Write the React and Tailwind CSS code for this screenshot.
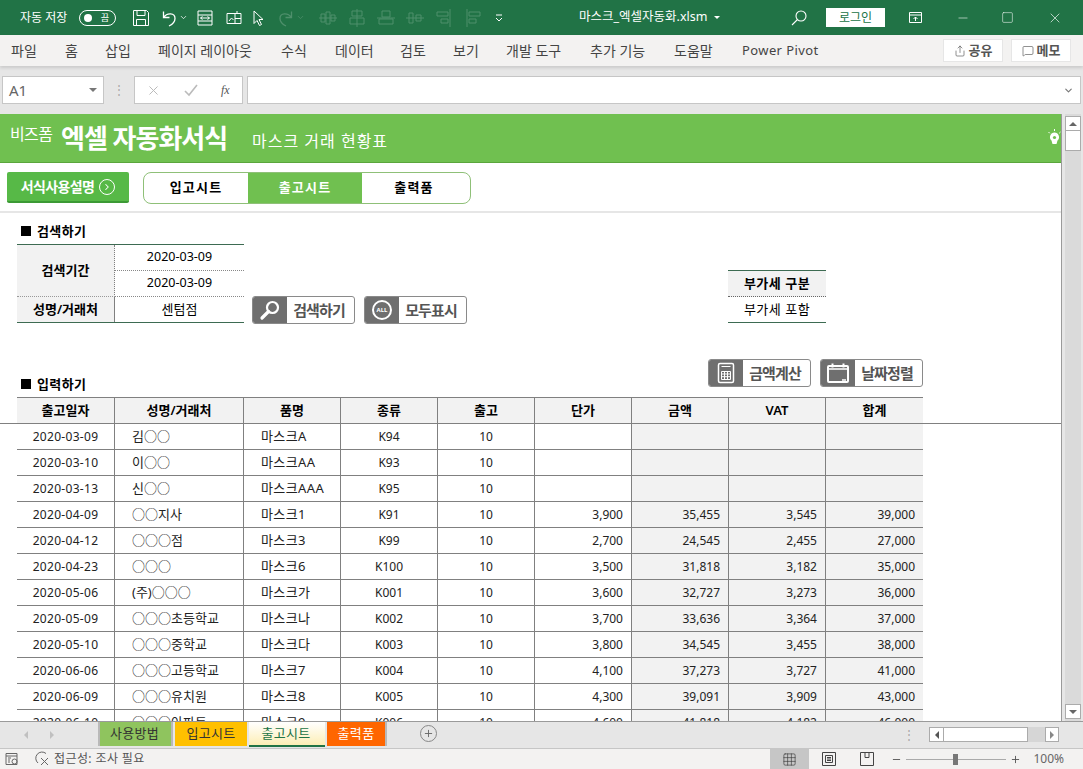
import { Minus, Square, X, Plus, ChevronDown, ChevronRight, MessageSquare, Share, Grid3x3 } from "lucide-react";

const cols = "grid-cols-[98px_129px_97px_97px_97px_97px_97px_97px_97px]";

const rows = [
  ["2020-03-09", "김○○", "마스크A", "K94", "10", "", "", "", ""],
  ["2020-03-10", "이○○", "마스크AA", "K93", "10", "", "", "", ""],
  ["2020-03-13", "신○○", "마스크AAA", "K95", "10", "", "", "", ""],
  ["2020-04-09", "○○지사", "마스크1", "K91", "10", "3,900", "35,455", "3,545", "39,000"],
  ["2020-04-12", "○○○점", "마스크3", "K99", "10", "2,700", "24,545", "2,455", "27,000"],
  ["2020-04-23", "○○○", "마스크6", "K100", "10", "3,500", "31,818", "3,182", "35,000"],
  ["2020-05-06", "(주)○○○", "마스크가", "K001", "10", "3,600", "32,727", "3,273", "36,000"],
  ["2020-05-09", "○○○초등학교", "마스크나", "K002", "10", "3,700", "33,636", "3,364", "37,000"],
  ["2020-05-10", "○○○중학교", "마스크다", "K003", "10", "3,800", "34,545", "3,455", "38,000"],
  ["2020-06-06", "○○○고등학교", "마스크7", "K004", "10", "4,100", "37,273", "3,727", "41,000"],
  ["2020-06-09", "○○○유치원", "마스크8", "K005", "10", "4,300", "39,091", "3,909", "43,000"],
  ["2020-06-10", "○○○아파트", "마스크9", "K006", "10", "4,600", "41,818", "4,182", "46,000"],
];

const menus = [
  ["파일", "w-[54px]"],
  ["홈", "w-[40px]"],
  ["삽입", "w-[53px]"],
  ["페이지 레이아웃", "w-[123px]"],
  ["수식", "w-[54px]"],
  ["데이터", "w-[65px]"],
  ["검토", "w-[53px]"],
  ["보기", "w-[53px]"],
  ["개발 도구", "w-[84px]"],
  ["추가 기능", "w-[84px]"],
  ["도움말", "w-[68px]"],
  ["Power Pivot", "w-[80px] text-[13px] tracking-[0.4px]"],
];
const headers = ["출고일자", "성명/거래처", "품명", "종류", "출고", "단가", "금액", "VAT", "합계"];

// title bar
function QatIcon({ children, dim }) {
  return (
    <svg width="18" height="18" viewBox="0 0 18 18" fill="none" stroke="white" strokeWidth="1" className={dim ? "opacity-20 shrink-0" : "shrink-0"}>
      {children}
    </svg>
  );
}

function TitleBar() {
  return (
    <div className="h-[35px] bg-[#217346] text-white flex items-center shrink-0 text-[12px]">
      <span className="ml-[20px] w-[59px] whitespace-nowrap">자동 저장</span>
      <div className="w-[37px] h-[16px] rounded-full border border-white flex items-center justify-between pl-[4px] pr-[6px]">
        <span className="w-[8px] h-[8px] rounded-full bg-white" />
        <span className="text-[9px] leading-none">끔</span>
      </div>
      <div className="ml-[16px] flex items-center">
        <QatIcon>
          <path d="M1.5 1.5h13l2 2v13h-15zM5 1.5v5h8v-5M4.5 16.5v-6h9v6" />
        </QatIcon>
        <div className="ml-[10px]">
          <QatIcon>
            <path d="M3.5 2.5v6h6M3.5 8.5C7 3.5 15 3.5 15 9.5c0 3.5-3 6-6 7.5" strokeWidth="1.3" />
          </QatIcon>
        </div>
        <ChevronDown size={9} className="ml-[1px]" />
        <div className="ml-[8px]">
          <QatIcon>
            <path d="M2 2h14v14H2zM2 6h14M2 12h14M4.5 9h9M4.5 9l2-1.5M4.5 9l2 1.5M13.5 9l-2-1.5M13.5 9l-2 1.5" />
          </QatIcon>
        </div>
        <div className="ml-[11px]">
          <QatIcon>
            <path d="M2 4.5h14v10H2zM10 4.5v10M10 9.5h6M4 12l2.5-3 2 2M12 2v2.5" />
          </QatIcon>
        </div>
        <div className="ml-[7px]">
          <QatIcon>
            <path d="M4 2l9 8.5H9l2.5 5-2 1L7 11.5l-3 3z" />
          </QatIcon>
        </div>
        <div className="ml-[9px]">
          <QatIcon dim>
            <path d="M14.5 2.5v6h-6M14.5 8.5C11 3.5 3 3.5 3 9.5c0 3.5 3 6 6 7.5" strokeWidth="1.3" />
          </QatIcon>
        </div>
        <ChevronDown size={9} className="ml-[1px] opacity-20" />
        <div className="ml-[14px] flex gap-[11px]">
          <QatIcon dim><path d="M2 5h4v8H2zM7 3h4v12H7zM12 6h4v6h-4zM0 9h18" /></QatIcon>
          <QatIcon dim><path d="M4 2h10v5H4zM2 9h14v6H2zM9 0v18" /></QatIcon>
          <QatIcon dim><path d="M5 2h8v6H5zM2 10h14v5H2zM0 9h18" /></QatIcon>
          <QatIcon dim><path d="M3 4h4v10H3zM10 6h5v6h-5zM0 9h18" /></QatIcon>
          <QatIcon dim><path d="M2 3h11v4H2zM6 10h7v4H6zM15 0v18" /></QatIcon>
          <QatIcon dim><path d="M5 3h11v4H5zM5 10h7v4H5zM3 0v18" /></QatIcon>
        </div>
        <svg width="10" height="10" viewBox="0 0 10 10" fill="none" stroke="white" className="ml-[12px]">
          <path d="M2 2h6M2 5l3 3 3-3" />
        </svg>
      </div>
      <span className="ml-[75px] whitespace-nowrap text-[12.5px] w-[128px]">마스크_엑셀자동화.xlsm</span>
      <span className="ml-[7px] w-0 h-0 border-x-[3px] border-x-transparent border-t-[3px] border-t-white" />
      <svg width="16" height="16" viewBox="0 0 16 16" fill="none" stroke="white" strokeWidth="1.1" className="ml-[71px]">
        <circle cx="10" cy="6" r="5" />
        <path d="M6.5 9.5L1 15" />
      </svg>
      <button className="ml-[19px] w-[59px] h-[19px] bg-white text-[#217346] text-[12px] leading-none">로그인</button>
      <svg width="14" height="12" viewBox="0 0 14 12" fill="none" stroke="white" className="ml-[24px]">
        <path d="M.5 .5h12v10H.5zM.5 3h12M6.5 9V5M4.5 7l2-2 2 2" />
      </svg>
      <Minus size={14} strokeWidth={1} className="ml-[33px]" />
      <Square size={13} strokeWidth={1} className="ml-[31px]" />
      <X size={16} strokeWidth={1} className="ml-[33px]" />
    </div>
  );
}

function MenuBar() {
  return (
    <div className="h-[31px] bg-[#f3f2f1] flex items-center shrink-0 text-[14px] text-[#444] shadow-[0_2px_3px_rgba(0,0,0,0.12)] relative pl-[11px]">
      {menus.map(([m, w]) => (
        <span key={m} className={`${w} shrink-0 whitespace-nowrap`}>{m}</span>
      ))}
      <div className="ml-auto flex gap-[8px] pr-[12px] text-[13px]">
        <button className="w-[60px] h-[23px] bg-white border border-[#e6e6e6] flex items-center justify-center gap-[3px] font-bold text-[#555]">
          <Share size={12} strokeWidth={1.3} /> 공유
        </button>
        <button className="w-[60px] h-[23px] bg-white border border-[#e6e6e6] flex items-center justify-center gap-[3px] font-bold text-[#555]">
          <MessageSquare size={12} strokeWidth={1.3} /> 메모
        </button>
      </div>
    </div>
  );
}

function FormulaBar() {
  return (
    <div className="h-[48px] bg-[#e6e6e6] flex items-start pt-[10px] shrink-0 px-[2px]">
      <div className="w-[102px] h-[28px] bg-white border border-[#c6c6c6] flex items-center justify-between pl-[6px] pr-[6px] text-[15px] text-[#666]">
        A1
        <span className="w-0 h-0 border-x-[4px] border-x-transparent border-t-[4px] border-t-[#777]" />
      </div>
      <div className="w-[30px] h-[28px] flex items-center justify-center text-[#aaa] text-[12px]">⋮</div>
      <div className="w-[109px] h-[28px] bg-white border border-[#c6c6c6] flex items-center pl-[11px] text-[#bbb]">
        <X size={15} strokeWidth={1.6} />
        <svg width="16" height="14" viewBox="0 0 16 14" fill="none" stroke="#bbb" strokeWidth="1.6" className="ml-[22px]">
          <path d="M2 8l4 4 8-10" />
        </svg>
        <span className="ml-[22px] text-[12px] italic text-[#555] font-['Liberation_Serif',serif]">fx</span>
      </div>
      <div className="ml-[4px] flex-1 h-[28px] bg-white border border-[#c6c6c6] flex items-center justify-end pr-[6px]">
        <ChevronDown size={11} strokeWidth={2.5} className="text-[#777]" />
      </div>
    </div>
  );
}

// sheet contents
function Banner() {
  return (
    <div className="h-[49px] bg-[#70c050] border-b border-[#5aa63c] flex items-center text-white pl-[10px] shrink-0">
      <span className="text-[16px] -mt-[9px] tracking-[-0.6px] w-[51px] whitespace-nowrap">비즈폼</span>
      <span className="text-[26px] font-bold tracking-[-1px] w-[191px] whitespace-nowrap">엑셀 자동화서식</span>
      <span className="text-[16px] tracking-[1px] mt-[6px] whitespace-nowrap">마스크 거래 현황표</span>
      <svg width="15" height="18" viewBox="0 0 15 18" className="ml-auto -mr-[1px]">
        <path d="M7.5 3.5a4.6 4.6 0 0 0-3 8l1 3.5h4l1-3.5a4.6 4.6 0 0 0-3-8z" fill="white" />
        <circle cx="7.5" cy="8.5" r="1.6" fill="#70c050" />
        <path d="M7.5 0v2M1.5 3l1.3 1.3M13.5 3l-1.3 1.3" stroke="white" strokeWidth="1" />
      </svg>
    </div>
  );
}

function NavRow() {
  return (
    <div className="h-[50px] border-b-2 border-[#e6e6e6] flex items-start pt-[9px] pl-[7px] shrink-0">
      <button className="w-[122px] h-[31px] bg-[#57b947] border-b-2 border-[#3c9a35] rounded-[2px] flex items-center justify-center gap-[5px] text-white text-[14px] font-bold tracking-[-0.6px]">
        서식사용설명
        <span className="w-[16px] h-[16px] rounded-full border-[1.5px] border-white flex items-center justify-center">
          <ChevronRight size={10} strokeWidth={2.5} />
        </span>
      </button>
      <div className="ml-[14px] w-[328px] h-[32px] border border-[#8fc078] rounded-[8px] overflow-hidden flex text-[13px] font-bold tracking-[1.2px] text-black">
        <span className="w-[104px] flex items-center justify-center">입고시트</span>
        <span className="w-[114px] bg-[#70c050] text-white flex items-center justify-center">출고시트</span>
        <span className="flex-1 flex items-center justify-center pr-[4px]">출력품</span>
      </div>
    </div>
  );
}

function ImgButton({ icon, label }) {
  return (
    <button className="w-[103px] h-[28px] flex border border-[#8a8a8a] rounded-[3px] overflow-hidden bg-white shrink-0">
      <span className="w-[34px] bg-[#6f6f6f] flex items-center justify-center text-white">{icon}</span>
      <span className="flex-1 flex items-center justify-center pr-[3px] text-[15px] font-bold tracking-[-0.9px] text-[#555]">{label}</span>
    </button>
  );
}

function SectionTitle({ children }) {
  return (
    <div className="flex items-center gap-[6px] text-[13px] leading-[18px] font-semibold tracking-[0.4px] text-black pl-[21px]">
      <span className="w-[10px] h-[10px] bg-black" />
      {children}
    </div>
  );
}

function SearchArea() {
  return (
    <div className="h-[134px] shrink-0 pt-[9px]">
      <SectionTitle>검색하기</SectionTitle>
      <div className="flex mt-[4px] pl-[17px]">
        <div className="w-[227px] border-y border-[#3d6b52] text-[12.5px] text-black grid grid-cols-[98px_129px] grid-rows-[26px_26px_25px]">
          <div className="row-span-2 bg-[#f2f2f2] text-[13px] font-semibold flex items-center justify-center border-r border-[#808080] border-b border-b-[#999] border-dotted">검색기간</div>
          <div className="flex items-center justify-center border-b border-dotted border-[#888]">2020-03-09</div>
          <div className="flex items-center justify-center border-b border-dotted border-[#888]">2020-03-09</div>
          <div className="bg-[#f2f2f2] text-[13px] font-semibold flex items-center justify-center border-r border-[#808080]">성명/거래처</div>
          <div className="flex items-center justify-center text-[13px]">센텀점</div>
        </div>
        <div className="self-end flex gap-[9px] ml-[8px] -mb-[1px]">
          <ImgButton
            icon={
              <svg width="22" height="22" viewBox="0 0 22 22" fill="none" stroke="white">
                <circle cx="13.5" cy="8.5" r="5.5" strokeWidth="2.2" />
                <path d="M9.5 12.5L3 19" strokeWidth="3.2" strokeLinecap="round" />
              </svg>
            }
            label="검색하기"
          />
          <ImgButton
            icon={
              <span className="w-[20px] h-[20px] rounded-full border-2 border-white flex items-center justify-center text-[6px] font-bold">ALL</span>
            }
            label="모두표시"
          />
        </div>
        <div className="self-end ml-[261px] w-[98px] border-y border-[#3d6b52] text-[13px] tracking-[0.5px] text-black">
          <div className="h-[26px] bg-[#f2f2f2] font-semibold flex items-center justify-center border-b border-dotted border-[#666]">부가세 구분</div>
          <div className="h-[25px] flex items-center justify-center">부가세 포함</div>
        </div>
      </div>
    </div>
  );
}

function TableArea() {
  return (
    <div className="flex-1 min-h-0 overflow-hidden">
      <div className="relative h-[50px]">
        <div className="absolute left-0 bottom-[4px]"><SectionTitle>입력하기</SectionTitle></div>
        <div className="flex justify-end gap-[9px] w-[923px] pt-[12px]">
          <ImgButton
            icon={
              <svg width="20" height="22" viewBox="0 0 20 22" fill="none" stroke="white">
                <rect x="2.5" y="1.5" width="15" height="19" rx="1.5" strokeWidth="1.5" />
                <path d="M5.5 4.5h9M5.5 9.5h9v8h-9zM8.5 9.5v8M11.5 9.5v8M5.5 12h9M5.5 14.7h9" strokeWidth="1" />
              </svg>
            }
            label="금액계산"
          />
          <ImgButton
            icon={
              <svg width="22" height="20" viewBox="0 0 22 20" fill="none" stroke="white">
                <rect x="1" y="3" width="20" height="16" rx="1" strokeWidth="2" />
                <path d="M1 6h20" strokeWidth="1.5" />
                <path d="M5.5 .5v4M16.5 .5v4" strokeWidth="2" />
                <path d="M15 17h4" strokeWidth="1.5" />
              </svg>
            }
            label="날짜정렬"
          />
        </div>
      </div>
      <div className={`ml-[17px] w-[906px] grid ${cols} border-t border-[#808080] bg-[#f2f2f2] text-[13px] font-semibold text-black h-[26px]`}>
        {headers.map((h, i) => (
          <div key={h} className={`flex items-center justify-center ${i < 8 ? "border-r border-[#808080]" : ""}`}>{h}</div>
        ))}
      </div>
      <div className="border-t border-[#808080]">
        {rows.map((r) => (
          <div key={r[0]} className={`ml-[17px] w-[906px] grid ${cols} h-[26px] border-b border-[#808080] text-[12px] text-[#222]`}>
            {r.map((c, i) => {
              let cls = "flex items-center min-w-0 whitespace-nowrap ";
              if (i < 8) cls += "border-r border-[#808080] ";
              if (i === 0) cls += "tracking-[0.3px] ";
              if (i === 1) cls += "text-[13px] ";
              if (i === 2) cls += "text-[13px] tracking-[0.4px] ";
              if (i === 1 || i === 2) cls += "pl-[17px] ";
              else if (i >= 5) cls += "justify-end pr-[8px] ";
              else cls += "justify-center ";
              if (i >= 6) cls += "bg-[#f2f2f2] ";
              return <div key={i} className={cls}>{c}</div>;
            })}
          </div>
        ))}
      </div>
    </div>
  );
}

function VScroll() {
  return (
    <div className="w-[21px] bg-[#e6e6e6] shrink-0 flex justify-center">
      <div className="w-[16px] bg-[#dadada] flex flex-col pt-[2px] h-full pb-[2px]">
        <div className="h-[15px] bg-white border border-[#ababab] flex items-center justify-center">
          <span className="w-0 h-0 border-x-[4px] border-x-transparent border-b-[4px] border-b-[#666]" />
        </div>
        <div className="h-[20px] bg-white border-x border-b border-[#ababab]" />
        <div className="mt-auto h-[15px] bg-white border border-[#ababab] flex items-center justify-center">
          <span className="w-0 h-0 border-x-[4px] border-x-transparent border-t-[4px] border-t-[#666]" />
        </div>
      </div>
    </div>
  );
}

function TabBar() {
  return (
    <div className="h-[28px] bg-[#e6e6e6] border-t border-[#9a9a9a] border-b border-b-[#c6c6c6] flex items-start shrink-0 text-[13px] tracking-[0.3px] relative">
      <span className="ml-[24px] mt-[9px] w-0 h-0 border-y-[4px] border-y-transparent border-r-[4px] border-r-[#c0c0c0]" />
      <span className="ml-[22px] mt-[9px] w-0 h-0 border-y-[4px] border-y-transparent border-l-[4px] border-l-[#c0c0c0]" />
      <div className="ml-[44px] flex h-[26px] items-start text-[#333]">
        <div className="w-[75px] h-[24px] bg-[#8fc45e] border-x-2 border-x-[#b9b9b9] flex items-center justify-center pr-[2px]">사용방법</div>
        <div className="ml-[2px] w-[72px] h-[24px] bg-[#ffc000] flex items-center justify-center">입고시트</div>
        <div className="ml-[2px] w-[76px] h-[25px] bg-linear-to-b from-white to-[#fdeeb5] border-b-2 border-[#217346] text-[#217346] flex items-center justify-center pr-[2px]">출고시트</div>
        <div className="ml-[2px] w-[58px] h-[24px] bg-[#ff6600] text-white flex items-center justify-center border-r-2 border-r-[#b9b9b9] box-content">출력품</div>
      </div>
      <div className="ml-[33px] mt-[3px] w-[17px] h-[17px] rounded-full border border-[#888] text-[#666] flex items-center justify-center">
        <Plus size={11} strokeWidth={2} />
      </div>
      <div className="ml-auto flex items-center mt-[5px] mr-[24px] gap-[14px]">
        <span className="text-[#aaa] text-[12px] leading-none">⋮</span>
        <div className="flex w-[130px] h-[15px] bg-[#d6d6d6]">
          <div className="w-[15px] bg-white border border-[#ababab] flex items-center justify-center">
            <span className="w-0 h-0 border-y-[4px] border-y-transparent border-r-[4px] border-r-[#555]" />
          </div>
          <div className="w-[84px] bg-white border-y border-r border-[#ababab]" />
          <div className="ml-auto w-[14px] bg-white border border-[#ababab] flex items-center justify-center">
            <span className="w-0 h-0 border-y-[4px] border-y-transparent border-l-[4px] border-l-[#888]" />
          </div>
        </div>
      </div>
    </div>
  );
}

function StatusBar() {
  return (
    <div className="flex-1 bg-[#f3f2f1] flex items-center text-[12px] text-[#555]">
      <svg width="14" height="14" viewBox="0 0 14 14" fill="none" stroke="#666" className="ml-[5px]">
        <path d="M1 1.5h11v11H1zM1 4h11M3 6h3M3 8h2M3 10h2" />
        <circle cx="9.5" cy="9.5" r="2.5" />
      </svg>
      <svg width="16" height="16" viewBox="0 0 16 16" fill="none" stroke="#666" className="ml-[16px]">
        <path d="M11 2.5A6 6 0 1 0 3 12M6 7l7 7M13 7l-7 7" />
      </svg>
      <span className="ml-[3px] tracking-[0.4px]">접근성: 조사 필요</span>
      <div className="ml-auto flex items-center h-full">
        <div className="w-[39px] h-full bg-[#c6c6c6] flex items-center justify-center">
          <Grid3x3 size={15} strokeWidth={1} className="text-[#333]" />
        </div>
        <svg width="14" height="14" viewBox="0 0 14 14" fill="none" stroke="#444" className="ml-[13px]">
          <path d="M.5 .5h13v13H.5zM3.5 3.5h7v7h-7zM5 5.5h4M5 7h4M5 8.5h4" />
        </svg>
        <svg width="14" height="14" viewBox="0 0 14 14" fill="none" stroke="#444" className="ml-[24px]">
          <path d="M.5 .5h13v13H.5zM5 .5v5h4v-5" />
        </svg>
        <Minus size={11} className="ml-[17px]" />
        <div className="ml-[4px] w-[100px] h-px bg-[#aaa] relative">
          <span className="absolute left-[47px] -top-[5px] w-[5px] h-[11px] bg-[#777]" />
        </div>
        <Plus size={11} className="ml-[4px]" />
        <span className="ml-[12px] mr-[19px] text-[12px] text-[#666]">100%</span>
      </div>
    </div>
  );
}

export default function App() {
  return (
    <div className="w-[1083px] h-[769px] overflow-hidden flex flex-col bg-[#e6e6e6] font-['Noto_Sans','Noto_Sans_CJK_KR',sans-serif]">
      <TitleBar />
      <MenuBar />
      <FormulaBar />
      <div className="h-[607px] flex shrink-0">
        <div className="w-[1062px] h-full bg-white border-r border-[#9a9a9a] flex flex-col overflow-hidden">
          <Banner />
          <NavRow />
          <SearchArea />
          <TableArea />
        </div>
        <VScroll />
      </div>
      <TabBar />
      <StatusBar />
    </div>
  );
}
